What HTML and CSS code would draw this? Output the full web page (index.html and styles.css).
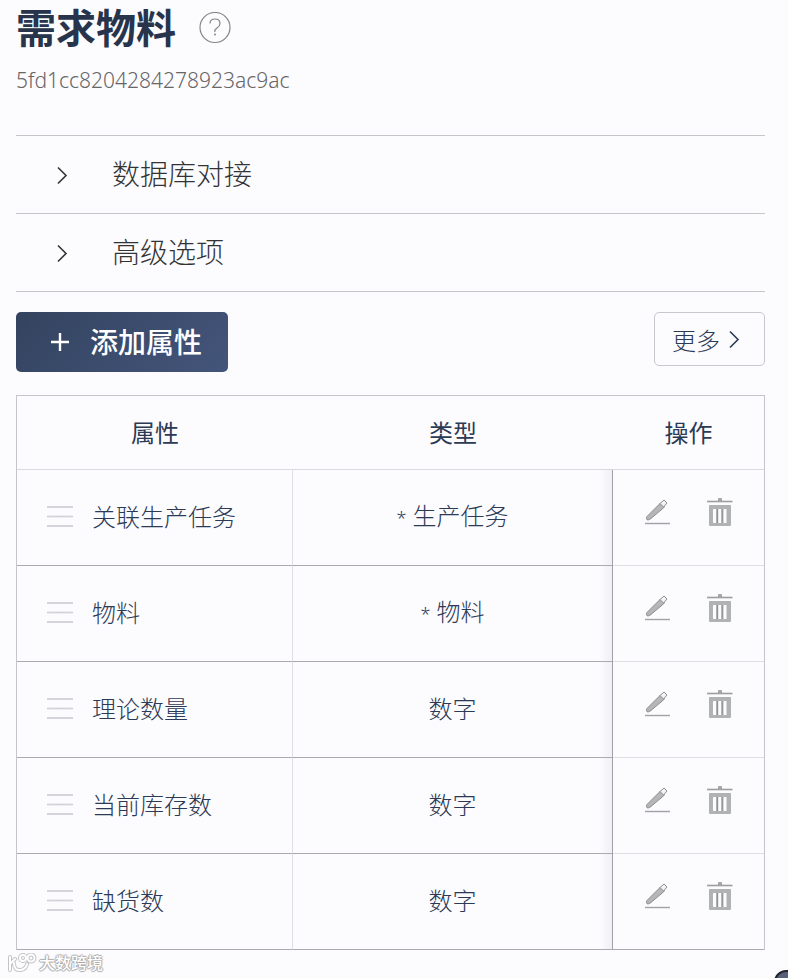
FILE: index.html
```html
<!DOCTYPE html>
<html lang="zh-CN">
<head>
<meta charset="UTF-8" />
<meta name="viewport" content="width=device-width, initial-scale=1" />
<title>需求物料</title>
<link rel="stylesheet" href="styles.css">
</head>
<body>
  <!-- shared icons -->
  <svg class="sprite" aria-hidden="true">
    <symbol id="chevron" viewBox="0 0 12 20">
      <path d="M2 2.500l8 8-8 8" fill="none" stroke="currentColor" stroke-width="1.600" />
    </symbol>
    <symbol id="drag" viewBox="0 0 28 24">
      <path d="M1 2h26M1 21h26" stroke="#d4d4da" stroke-width="2" />
      <path d="M1 11.500h26" stroke="#dcdce1" stroke-width="2" />
      <path d="M1 11.500h26" stroke="#cfcfd5" stroke-width="1" stroke-dasharray="2 1" />
    </symbol>
    <symbol id="edit" viewBox="0 0 26 26">
      <path d="M2 17.500L15.500 4l4 4L6 19.500Q3.500 21.500 2 20.800Q1 19.500 2 17.500Z" fill="#b6b6b8" stroke="#8e8e90" />
      <path d="M15 4.500L19 1L22 4L18.500 8Z" fill="#f2f2f5" stroke="#8e8e90" />
      <path d="M0 24.500h25" stroke="#a2a2a4" stroke-width="1.400" />
    </symbol>
    <symbol id="trash" viewBox="0 0 26 30">
      <path d="M11.500 4V1.500h3V4" fill="#aaa" stroke="#a2a4a3" />
      <path d="M0 4.500h25.500" stroke="#9c9e9d" stroke-width="1.600" />
      <rect x="2" y="8" width="22" height="21" rx="1" fill="#b1b3b2" />
      <path d="M7.500 12v14M12.800 12v14M18 12v14" stroke="#fcfcff" stroke-width="3" />
      <path d="M10.400 12v14M15.300 12v14" stroke="#929493" stroke-width="1.200" />
    </symbol>
  </svg>

  <main class="page">
    <header class="title-row">
      <h1>需求物料</h1>
      <button class="help" aria-label="帮助">
        <svg width="32" height="32" viewBox="0 0 32 32">
          <circle cx="16" cy="15.500" r="15" fill="none" stroke="#858588" stroke-width="1.200" />
          <path d="M11 11.500Q11 7 16 7t5 4.500Q21 14 18 16t-2 4" fill="none" stroke="#858588" stroke-width="1.200" />
          <circle cx="16" cy="22.500" r="1" fill="#858588" />
        </svg>
      </button>
    </header>
    <p class="id">5fd1cc8204284278923ac9ac</p>

    <div class="sections">
      <button class="section"><svg class="chevron"><use href="#chevron" /></svg><span>数据库对接</span></button>
      <button class="section"><svg class="chevron"><use href="#chevron" /></svg><span>高级选项</span></button>
    </div>

    <div class="toolbar">
      <button class="add">
        <svg width="20" height="20" viewBox="0 0 20 20"><path d="M10 1v18M1 10h18" stroke="#fff" stroke-width="2.400" /></svg>
        <span>添加属性</span>
      </button>
      <button class="more">更多<svg class="chevron"><use href="#chevron" /></svg></button>
    </div>

    <table>
      <colgroup><col class="col-name"><col><col class="col-action"></colgroup>
      <thead>
        <tr><th>属性</th><th>类型</th><th>操作</th></tr>
      </thead>
      <tbody>
        <tr>
          <td><div class="name"><svg class="drag"><use href="#drag" /></svg>关联生产任务</div></td>
          <td class="type"><span class="star">*</span> 生产任务</td>
          <td class="action"><div class="actions">
            <button aria-label="编辑"><svg class="edit"><use href="#edit" /></svg></button>
            <button aria-label="删除"><svg class="trash"><use href="#trash" /></svg></button>
          </div></td>
        </tr>
        <tr>
          <td><div class="name"><svg class="drag"><use href="#drag" /></svg>物料</div></td>
          <td class="type"><span class="star">*</span> 物料</td>
          <td class="action"><div class="actions">
            <button aria-label="编辑"><svg class="edit"><use href="#edit" /></svg></button>
            <button aria-label="删除"><svg class="trash"><use href="#trash" /></svg></button>
          </div></td>
        </tr>
        <tr>
          <td><div class="name"><svg class="drag"><use href="#drag" /></svg>理论数量</div></td>
          <td class="type">数字</td>
          <td class="action"><div class="actions">
            <button aria-label="编辑"><svg class="edit"><use href="#edit" /></svg></button>
            <button aria-label="删除"><svg class="trash"><use href="#trash" /></svg></button>
          </div></td>
        </tr>
        <tr>
          <td><div class="name"><svg class="drag"><use href="#drag" /></svg>当前库存数</div></td>
          <td class="type">数字</td>
          <td class="action"><div class="actions">
            <button aria-label="编辑"><svg class="edit"><use href="#edit" /></svg></button>
            <button aria-label="删除"><svg class="trash"><use href="#trash" /></svg></button>
          </div></td>
        </tr>
        <tr>
          <td><div class="name"><svg class="drag"><use href="#drag" /></svg>缺货数</div></td>
          <td class="type">数字</td>
          <td class="action"><div class="actions">
            <button aria-label="编辑"><svg class="edit"><use href="#edit" /></svg></button>
            <button aria-label="删除"><svg class="trash"><use href="#trash" /></svg></button>
          </div></td>
        </tr>
      </tbody>
    </table>
  </main>

  <div class="watermark">
    <svg width="30" height="20" viewBox="0 0 30 20" fill="none" stroke-linecap="round">
      <g stroke="#c4c4c7" stroke-width="4">
        <path d="M2 4v13M2 11l5-5M6 10q0 8 7 7q5-1 6-6" />
        <circle cx="15" cy="5" r="3" /><circle cx="23" cy="5" r="3.500" />
      </g>
      <g stroke="#fff" stroke-width="2">
        <path d="M2 4v13M2 11l5-5M6 10q0 8 7 7q5-1 6-6" />
        <circle cx="15" cy="5" r="3" /><circle cx="23" cy="5" r="3.500" />
      </g>
    </svg>
    <span>大数跨境</span>
  </div>
  <button class="float" aria-label="客服"></button>
</body>
</html>
```

FILE: styles.css
```css
* {
  box-sizing: border-box;
}

body {
  margin: 0;
  background: #fcfbfe;
  color: #2b3a55;
  font-family: "Noto Sans", "Noto Sans CJK SC", sans-serif;
  font-weight: 300;
}

button {
  margin: 0;
  padding: 0;
  border: none;
  background: none;
  color: inherit;
  font: inherit;
  cursor: pointer;
}

svg {
  display: block;
  flex: none;
}

.sprite {
  position: absolute;
  width: 0;
  height: 0;
}

.page {
  padding: 0 23px 28px 16px;
}

.title-row {
  display: flex;
  align-items: center;
  gap: 23px;
  height: 56px;
}

h1 {
  margin: 0;
  font-size: 40px;
  line-height: 56px;
  font-weight: 700;
  color: #27344b;
}

.id {
  margin: 8px 0 39px;
  font-size: 21px;
  line-height: 32px;
  color: #666;
}

.sections {
  border-top: 1px solid #c6c6ca;
}

.section {
  display: flex;
  align-items: center;
  gap: 44px;
  width: 100%;
  height: 78px;
  padding-left: 40px;
  border-bottom: 1px solid #c6c6ca;
  font-size: 28px;
  color: #333;
}

.section span {
  padding-bottom: 4px;
}

.chevron {
  width: 12px;
  height: 20px;
}

.toolbar {
  display: flex;
  justify-content: space-between;
  align-items: flex-start;
  padding: 20px 0 23px;
}

.add {
  display: flex;
  align-items: center;
  gap: 20px;
  height: 60px;
  padding: 0 26px 0 34px;
  border-radius: 5px;
  background: linear-gradient(135deg, #33435f, #44557b);
  color: #fff;
  font-size: 28px;
  font-weight: 500;
}

.add span {
  padding-bottom: 2px;
}

.more {
  display: flex;
  align-items: center;
  gap: 8px;
  height: 54px;
  padding: 0 24px 0 17px;
  border: 1px solid #c6c8ce;
  border-radius: 5px;
  font-size: 24px;
}

table {
  width: 100%;
  table-layout: fixed;
  border: 1px solid #c4c6cb;
  border-bottom: none;
  border-spacing: 0;
  font-size: 24px;
  line-height: 36px;
}

.col-name {
  width: 276px;
}

.col-action {
  width: 151px;
}

th {
  height: 74px;
  padding: 0;
  border-bottom: 1px solid #d8dadf;
  font-weight: 400;
}

td {
  height: 96px;
  padding: 0 0 2px;
  border-right: 1px solid #dddfe3;
  border-bottom: 1px solid #a9abb1;
}

.name {
  display: flex;
  align-items: center;
  gap: 18px;
  padding-left: 29px;
}

.drag {
  width: 28px;
  height: 24px;
}

.type {
  border-right-color: #a0a2a8;
  background: linear-gradient(to left, #f0f0f4, transparent 12px);
  text-align: center;
}

.star {
  font-size: 18px;
}

.action {
  border-right: none;
  border-bottom-color: #dddfe3;
}

tr:last-child .action {
  border-bottom-color: #a9abb1;
}

.actions {
  display: flex;
  align-items: center;
  gap: 36px;
  padding: 0 0 10px 32px;
}

.edit {
  width: 26px;
  height: 26px;
}

.trash {
  width: 26px;
  height: 30px;
}

.watermark {
  position: absolute;
  left: 8px;
  top: 952px;
  display: flex;
  align-items: center;
  gap: 1px;
  color: #fff;
  font-size: 16px;
  line-height: 22px;
  font-weight: 500;
  text-shadow: 1px 0 1px #aaa, -1px 0 1px #aaa, 0 1px 1px #aaa, 0 -1px 1px #aaa;
}

.float {
  position: fixed;
  right: -26px;
  bottom: -32px;
  width: 40px;
  height: 40px;
  border: 2px solid #20252f;
  border-radius: 12px;
  background: #59617a;
}
```
